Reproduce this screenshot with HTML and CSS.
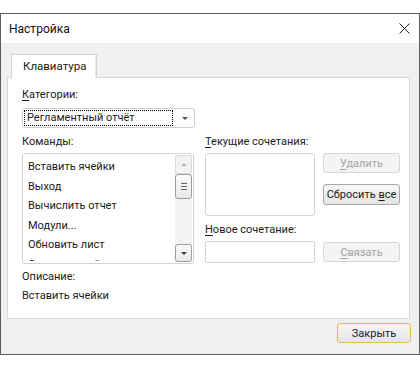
FILE: index.html
```html
<!DOCTYPE html>
<html lang="ru">
<head>
    <meta charset="UTF-8">
    <title>Настройка</title>
    <link rel="stylesheet" href="styles.css">
</head>
<body>
    <div class="window">
        <div class="titlebar">
            <span class="title">Настройка</span>
            <svg class="close" width="11" height="11" viewBox="0 0 11 11">
                <path d="M0.5 0.5 L10.5 10.5 M10.5 0.5 L0.5 10.5" stroke="#222" stroke-width="1" fill="none"/>
            </svg>
        </div>
        <div class="content">
            <div class="tabs">
                <div class="tab active">Клавиатура</div>
            </div>
            <div class="panel">
                <div class="label"><u>К</u>атегории:</div>
                <div class="combo">
                    <span class="combo-text">Регламентный отчёт</span>
                    <span class="combo-arrow"></span>
                </div>

                <div class="main">
                    <div class="left-col">
                        <div class="label">Команды:</div>
                        <div class="listbox commands">
                            <ul class="items">
                                <li>Вставить ячейки</li>
                                <li>Выход</li>
                                <li>Вычислить отчет</li>
                                <li>Модули...</li>
                                <li>Обновить лист</li>
                                <li>Отменить действие</li>
                            </ul>
                            <div class="scrollbar">
                                <div class="sb-btn sb-up disabled"><span class="arr-up"></span></div>
                                <div class="sb-thumb"><span class="grip"></span></div>
                                <div class="sb-track"></div>
                                <div class="sb-btn sb-down"><span class="arr-down"></span></div>
                            </div>
                        </div>
                    </div>
                    <div class="right-col">
                        <div class="label"><u>Т</u>екущие сочетания:</div>
                        <div class="keys-row">
                            <div class="listbox keys"></div>
                            <div class="btn-col">
                                <button class="btn" disabled><u>У</u>далить</button>
                                <button class="btn">Сбросить <u>в</u>се</button>
                            </div>
                        </div>
                        <div class="label new-label"><u>Н</u>овое сочетание:</div>
                        <div class="keys-row">
                            <div class="textbox"></div>
                            <button class="btn bind" disabled><u>С</u>вязать</button>
                        </div>
                    </div>
                </div>

                <div class="label desc-label">Описание:</div>
                <div class="desc">Вставить ячейки</div>
            </div>
            <div class="footer">
                <button class="btn default">Закрыть</button>
            </div>
        </div>
    </div>
</body>
</html>
```

FILE: styles.css
```css
body {
    margin: 0;
    background: #fff;
    font-family: Roboto, "Liberation Sans", sans-serif;
    font-size: 11px;
    color: #1b1b1b;
}

.window {
    box-sizing: border-box;
    width: 420px;
    height: 342px;
    margin-top: 13px;
    border: 1px solid #5c5c5c;
    background: #f0f0f0;
    display: flex;
    flex-direction: column;
}

.titlebar {
    height: 29px;
    background: #fff;
    display: flex;
    align-items: center;
    justify-content: space-between;
    padding: 0 9px 0 8px;
}

.title {
    font-size: 12px;
    color: #111;
}

.close {
    margin-top: -1px;
}

.content {
    padding: 11px 9px 0 6px;
}

.tabs {
    display: flex;
    padding-left: 4px;
    height: 23px;
}

.tab {
    box-sizing: border-box;
    width: 86px;
    height: 24px;
    padding: 4px 0 0 11px;
    font-size: 11.5px;
    background: #fff;
    border: 1px solid #d6d6d6;
    border-bottom: none;
    box-shadow: -1px 0 0 #e8e8e8 inset;
    position: relative;
    z-index: 1;
}

.panel {
    box-sizing: border-box;
    height: 242px;
    background: #fff;
    border: 1px solid #d9d9d9;
    padding: 9px 0 0 14px;
}

.label {
    line-height: 16px;
    height: 16px;
}

u {
    text-decoration-thickness: 1px;
    text-underline-offset: 2px;
}

.combo {
    box-sizing: border-box;
    width: 173px;
    height: 20px;
    margin-top: 5px;
    border: 1px solid #cfcfcf;
    border-radius: 3px;
    display: flex;
    align-items: center;
    padding: 0 1px;
}

.combo-text {
    box-sizing: border-box;
    width: 149px;
    height: 16px;
    line-height: 14px;
    padding-left: 2px;
    border: 1px dotted #000;
}

.combo-arrow {
    margin-left: 9px;
    width: 0;
    height: 0;
    border-left: 3px solid transparent;
    border-right: 3px solid transparent;
    border-top: 3px solid #555;
}

.main {
    display: flex;
    margin-top: 6px;
}

.left-col {
    width: 172px;
}

.right-col {
    margin-left: 11px;
}

.listbox {
    box-sizing: border-box;
    border: 1px solid #d2d2d2;
    border-radius: 3px;
    background: #fff;
}

.commands {
    margin-top: 3px;
    height: 111px;
    display: flex;
    overflow: hidden;
}

.items {
    list-style: none;
    margin: 0 0 2px;
    padding: 3px 0 0 5px;
    flex: 1;
    overflow: hidden;
}

.items li {
    height: 19.6px;
    line-height: 19.6px;
    white-space: nowrap;
}

.scrollbar {
    width: 17px;
    margin: 1px 1px 1px 0;
    background: #f3f3f3;
    display: flex;
    flex-direction: column;
}

.sb-btn,
.sb-thumb {
    box-sizing: border-box;
    border: 1px solid #9c9c9c;
    border-radius: 3px;
    background: linear-gradient(#fbfbfb, #e9e9e9);
    display: flex;
    align-items: center;
    justify-content: center;
}

.sb-up {
    height: 19px;
}

.sb-btn.disabled {
    border-color: #d8d8d8;
    background: #f3f3f3;
}

.sb-thumb {
    height: 25px;
}

.sb-track {
    flex: 1;
}

.sb-down {
    height: 18px;
}

.arr-up,
.arr-down {
    width: 0;
    height: 0;
    border-left: 3px solid transparent;
    border-right: 3px solid transparent;
}

.arr-up {
    border-bottom: 3px solid #bcbcbc;
}

.arr-down {
    border-top: 3px solid #3c3c3c;
}

.grip {
    width: 6px;
    height: 5px;
    border-top: 1px solid #666;
    border-bottom: 1px solid #666;
    background: linear-gradient(transparent 2px, #666 2px, #666 3px, transparent 3px);
}

.keys-row {
    display: flex;
    margin-top: 3px;
}

.keys {
    width: 110px;
    height: 63px;
}

.btn-col {
    display: flex;
    flex-direction: column;
    margin-left: 8px;
}

.btn {
    box-sizing: border-box;
    width: 77px;
    height: 20px;
    padding: 0;
    font-family: inherit;
    font-size: 11px;
    color: #1b1b1b;
    white-space: nowrap;
    border: 1px solid #a9a9a9;
    border-radius: 3px;
    background: linear-gradient(#f7f7f7, #e4e4e4);
}

.btn:disabled {
    color: #a3a3a3;
    border-color: #d5d5d5;
    background: #f4f4f4;
}

.btn-col .btn + .btn {
    margin-top: 11px;
    height: 21px;
}

.new-label {
    margin-top: 6px;
}

.textbox {
    box-sizing: border-box;
    width: 110px;
    height: 22px;
    border: 1px solid #d2d2d2;
    border-radius: 2px;
}

.bind {
    margin-left: 8px;
    margin-top: 1px;
    height: 20px;
}

.desc-label {
    margin-top: 5px;
}

.desc {
    margin-top: 3px;
    line-height: 16px;
}

.footer {
    display: flex;
    justify-content: flex-end;
    padding-top: 4px;
    margin-right: -1px;
}

.btn.default {
    width: 74px;
    height: 20px;
    border-color: #eeb55a;
}
```
